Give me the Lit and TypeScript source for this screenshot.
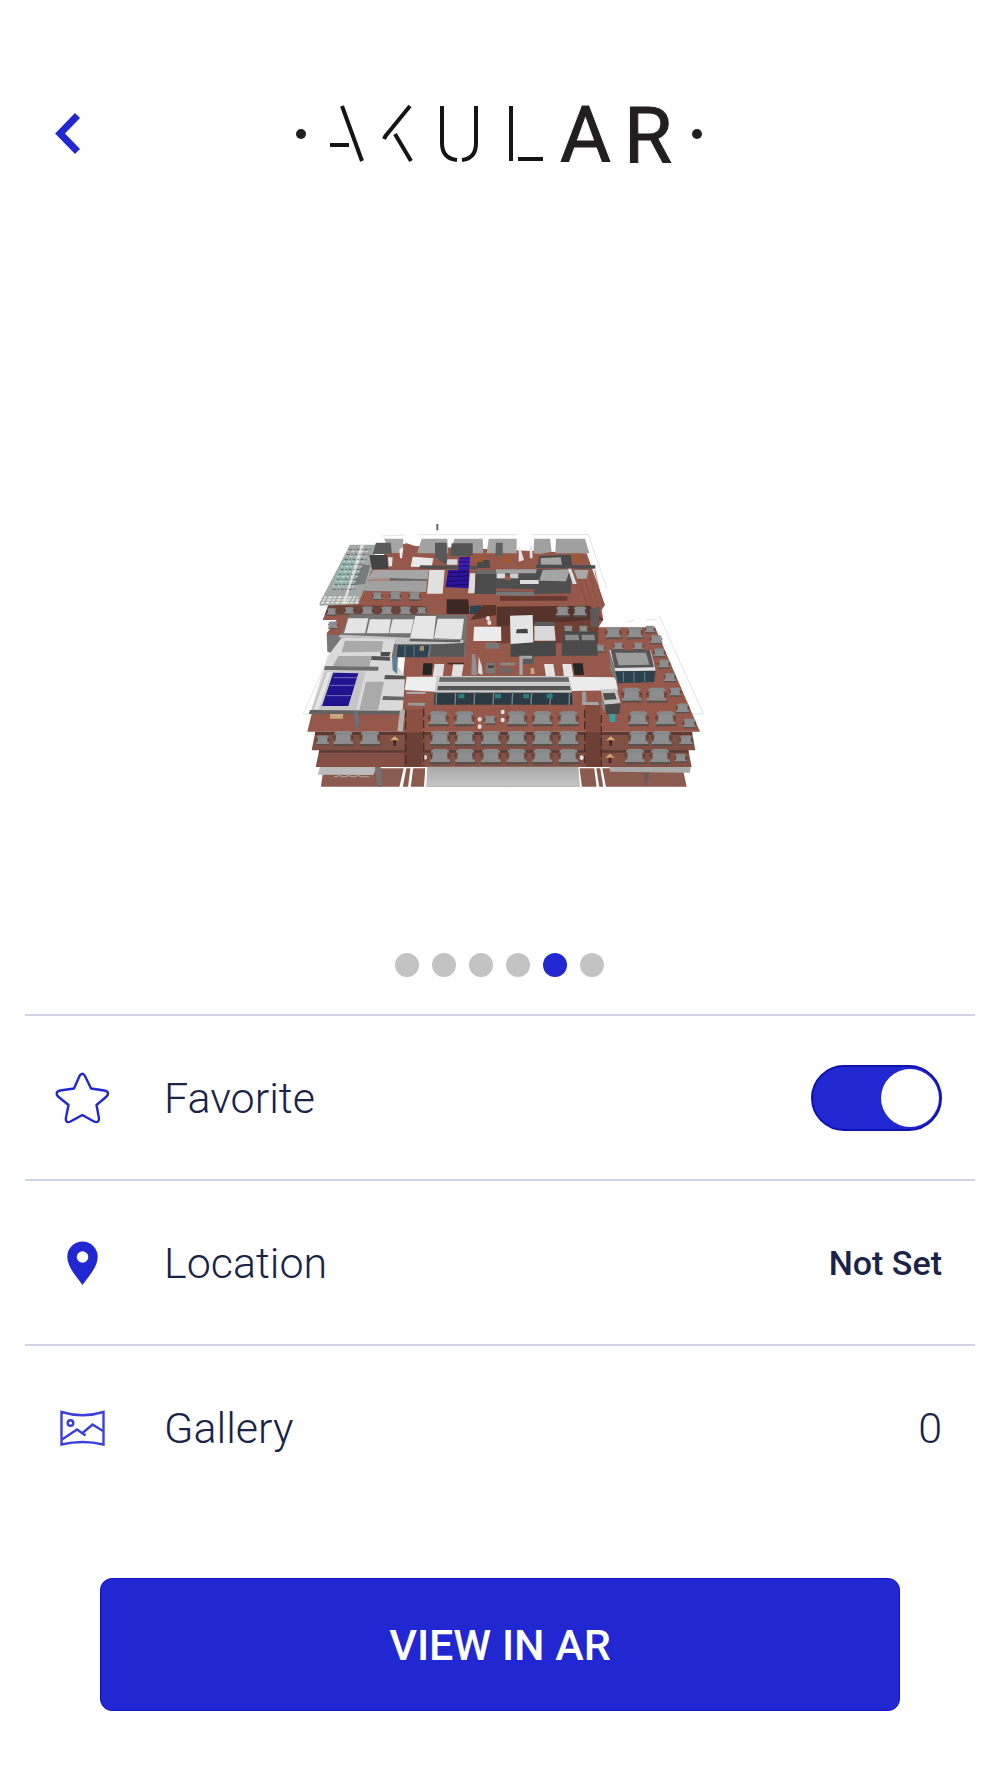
import { LitElement, html, svg, css } from "lit";
import { customElement, property, state } from "lit/decorators.js";

type Poly = [string, string];

const RED = "#95584a";

const decks: Poly[] = [
  // ground floor
  ["100,775 1178,775 1190,830 93,830", "#8c5b50"],
  ["90,770 260,770 250,795 83,794", "#bcbcbc"],
  ["958,770 1202,770 1200,788 960,785", "#a9a9a9"],
  ["342,770 350,770 338,832 328,832", "#ffffff"],
  ["362,770 370,770 362,832 354,832", "#ffffff"],
  ["406,770 414,770 410,832 402,832", "#ffffff"],
  ["862,770 868,770 876,832 868,832", "#ffffff"],
  ["912,770 918,770 928,832 920,832", "#ffffff"],
  ["930,770 936,770 948,832 940,832", "#ffffff"],
  ["255,770 272,770 278,830 262,830", "#77706e"],
  ["1062,788 1078,788 1070,828 1064,822", "#6d5a55"],
  // third, second and first floor
  ["88,720 1195,720 1205,771 77,771", "#845045"],
  ["88,720 1195,720 1196,728 86,728", "#5a3a32"],
  ["76,665 1206,665 1216,721 65,721", "#815044"],
  ["76,665 1206,665 1207,675 74,675", "#5a3a32"],
  ["65,612 330,600 345,440 925,352 1095,352 1230,665 52,665", RED],
  ["348,600 402,596 396,668 342,668", "#8a5042"],
  ["885,585 930,585 934,668 888,668", "#834c3f"],
  ["345,668 398,668 396,770 342,770", "#6c4034"],
  ["886,668 934,668 936,770 888,770", "#6c4034"],
  // upper terrace
  ["300,112 350,100 375,108 890,130 945,285 935,300 940,330 925,352 925,440 130,440 110,370 140,330 98,330 115,285 245,180", RED],
  ["110,372 160,378 125,430 112,425", "#777777"],
  ["470,268 535,268 538,312 470,312", "#3d2824"],
  ["620,290 900,287 940,330 620,350", "#56332b"],
  ["630,258 832,258 832,272 630,272", "#693a2f"],
  ["620,350 900,330 925,345 925,400 620,400", "#713f33"],
  ["540,288 575,286 572,312 540,312", "#2b4454"],
  ["580,285 618,285 618,315 560,328 540,330", "#5a342b"],
  ["115,286 410,288 410,314 105,314", "#6c4338"],
];

const buildings: Poly[] = [
  // glazed roof
  ["180,104 262,104 255,130 245,180 205,282 90,287 88,280", "#a2a8a6"],
  ["162,145 205,143 170,228 122,230", "#93b3af"],
  ["215,165 242,165 225,222 190,225", "#777d7d"],
  ["212,104 222,104 165,282 158,282", "#dfe2e0"],
  // back row
  ["282,86 340,86 338,128 302,130", "#a6a6a6"],
  ["258,98 302,98 306,132 248,132", "#5c5c5c"],
  ["238,135 290,135 296,176 246,178", "#444444"],
  ["395,86 472,86 474,130 381,130", "#a2a2a2"],
  ["435,98 470,98 472,168 435,140", "#585858"],
  ["493,86 578,86 580,130 483,130", "#a2a2a2"],
  ["485,100 548,100 548,138 480,138", "#555555"],
  ["596,86 680,86 680,130 590,130", "#a6a6a6"],
  ["618,98 638,98 638,138 616,138", "#606060"],
  ["733,86 780,86 785,125 750,132 730,130", "#a0a0a0"],
  ["798,86 885,86 898,130 796,130", "#a0a0a0"],
  ["368,140 430,145 425,172 362,170", "#e9e9e9"],
  ["328,118 340,112 336,145 330,145", "#eeeeee"],
  ["294,142 308,142 306,168 296,170", "#e4e4e4"],
  ["686,110 690,110 702,150 686,155", "#e4e4e4"],
  ["718,108 726,108 728,145 720,145", "#e4e4e4"],
  ["472,148 502,148 502,164 470,164", "#dadada"],
  ["390,166 560,168 560,178 388,176", "#505050"],
  ["562,150 598,150 600,174 560,174", "#494949"],
  // long grey roofs
  ["250,180 417,180 413,208 230,210", "#a6a6a6"],
  ["240,206 300,204 300,212 238,212", "#a98a80"],
  ["300,204 412,208 411,213 300,212", "#666666"],
  ["232,212 411,212 408,246 215,242", "#a0a0a0"],
  ["418,180 464,180 458,251 411,251", "#e0e0e0"],
  ["540,190 556,190 554,250 534,250", "#dcdcdc"],
  ["475,180 505,180 508,142 540,140 535,235 466,232", "#2c139c"],
  ["558,180 618,180 618,252 554,252", "#4b4b4b"],
  ["558,180 618,180 618,192 558,192", "#6b6b6b"],
  // right plant room
  ["618,178 848,178 842,250 744,252 618,245", "#4f4f4f"],
  ["618,178 740,178 738,190 618,190", "#a4a4a4"],
  ["620,190 645,190 645,205 620,205", "#dddddd"],
  ["660,190 685,190 685,205 660,205", "#cccccc"],
  ["645,196 660,196 662,210 644,210", "#96584a"],
  ["758,180 840,178 828,214 748,212", "#a5a5a5"],
  ["748,138 842,134 846,166 745,166", "#494949"],
  ["752,144 812,142 816,164 752,164", "#a5a5a5"],
  ["738,164 916,166 916,176 738,174", "#4d4d4d"],
  ["690,210 746,210 746,222 690,222", "#dedede"],
  ["618,235 732,238 732,245 618,243", "#96584a"],
  ["618,245 732,246 732,258 618,256", "#777777"],
  ["834,176 844,176 860,222 848,222", "#dddddd"],
  ["852,180 896,180 890,206 862,206", "#a8a8a8"],
  // white roofed block
  ["178,313 532,315 526,440 320,440 130,430", "#737373"],
  ["175,325 235,325 225,370 162,370", "#e4e4e4"],
  ["240,328 303,328 296,370 230,370", "#e4e4e4"],
  ["308,328 372,328 362,370 298,370", "#e4e4e4"],
  ["376,318 438,318 430,388 360,385", "#e6e6e6"],
  ["443,326 522,326 514,388 432,385", "#e4e4e4"],
  ["150,374 520,390 520,402 315,402 145,382", "#c4c4c4"],
  ["360,386 512,390 510,397 358,394", "#606060"],
  ["424,404 524,398 522,440 420,440", "#585858"],
  ["324,406 418,406 412,442 320,442", "#2d4353"],
  ["390,408 402,408 402,422 388,422", "#a58a62"],
  // lower left roofs
  ["155,383 315,388 305,440 345,500 338,602 60,612 112,440", "#dadada"],
  ["165,392 280,394 275,425 155,427", "#a9a9a9"],
  ["145,438 245,438 238,470 128,468", "#a8a8a8"],
  ["245,438 300,440 300,452 243,450", "#555555"],
  ["272,426 302,426 298,438 272,438", "#4c4c4c"],
  ["105,468 266,470 264,482 102,480", "#6d6d6d"],
  ["106,484 228,484 198,600 64,600", "#c6c6c6"],
  ["112,486 124,486 86,598 72,598", "#e6e6e6"],
  ["130,488 205,490 175,588 96,588", "#1f138f"],
  ["228,515 282,515 264,600 208,600", "#aaaaaa"],
  ["285,495 345,497 345,508 283,508", "#555555"],
  ["280,558 342,560 342,571 277,570", "#666666"],
  ["60,600 336,602 334,613 56,612", "#616161"],
  ["306,440 324,440 321,492 308,480", "#5c7f92"],
  ["330,600 345,600 338,665 322,662", "#b4b0ae"],
  ["192,602 202,602 208,640 200,660 196,640", "#5f7482"],
  ["120,612 160,612 158,626 120,626", "#c9a77a"],
  // middle courtyard
  ["552,350 633,350 634,393 550,393", "#ececec"],
  ["588,398 628,398 628,416 586,416", "#777777"],
  ["660,317 728,315 730,402 662,402", "#e5e5e5"],
  ["680,358 712,356 714,370 678,370", "#444444"],
  ["733,335 793,335 797,348 733,348", "#5c5c5c"],
  ["733,348 793,348 797,392 733,392", "#d8d8d8"],
  ["662,402 797,392 798,438 662,440", "#474747"],
  ["820,363 918,365 924,437 815,437", "#4a4a4a"],
  ["825,374 865,374 868,391 826,391", "#8b8b8b"],
  ["874,374 912,374 916,391 876,391", "#8b8b8b"],
  ["900,296 930,290 926,350 902,350", "#5e5957"],
  ["400,460 428,460 425,495 398,495", "#252525"],
  ["434,462 463,462 458,500 428,500", "#e0e0e0"],
  ["490,462 521,462 515,500 484,500", "#e0e0e0"],
  ["762,462 790,462 796,500 768,500", "#e4e4e4"],
  ["817,462 844,462 850,500 822,500", "#e4e4e4"],
  ["848,460 878,460 882,495 854,495", "#252525"],
  ["472,458 522,458 522,463 472,463", "#4a2c26"],
  ["546,432 556,432 562,495 544,495", "#8f8f8f"],
  ["566,440 576,470 578,495 564,490", "#dddddd"],
  ["588,458 616,458 616,490 588,490", "#777777"],
  ["594,466 612,466 612,474 594,474", "#444444"],
  ["630,458 675,458 675,466 630,466", "#8a8a8a"],
  ["628,474 640,470 668,476 668,488 632,490", "#6d6664"],
  ["700,438 732,438 730,462 700,462", "#5a5a5a"],
  ["688,437 726,437 726,446 698,446 698,495 688,495", "#a5a5a5"],
  ["722,474 732,474 734,492 722,492", "#c9a77a"],
  // front hall
  ["350,500 448,500 436,545 344,540", "#ededed"],
  ["440,498 838,498 846,548 434,548", "#cacaca"],
  ["450,502 835,502 838,515 447,515", "#686868"],
  ["444,528 840,528 842,541 442,541", "#555555"],
  ["434,548 846,548 848,584 432,584", "#2c3b43"],
  ["836,500 976,502 984,541 846,543", "#ebebeb"],
  ["350,545 408,545 406,552 348,552", "#aaaaaa"],
  ["355,578 406,578 404,588 352,586", "#999999"],
  ["876,545 888,545 890,585 876,585", "#9a9a9a"],
  ["876,576 926,576 926,586 876,584", "#a5a5a5"],
  // glazed pavilion
  ["958,420 1082,420 1097,482 976,484", "#e0e0e0"],
  ["962,420 1080,420 1092,472 974,474", "#565656"],
  ["976,428 1068,428 1078,464 986,466", "#9c9c9c"],
  ["958,424 976,484 984,520 960,480", "#7a7a7a"],
  ["976,484 1097,482 1092,516 984,520", "#2b414e"],
  // stair tower
  ["932,538 980,536 992,580 944,584", "#c7c7c7"],
  ["938,550 974,548 980,568 944,570", "#505050"],
  ["932,545 944,584 948,612 936,590", "#8a8a8a"],
  ["944,584 992,580 988,612 948,612", "#484848"],
  ["958,612 976,612 976,636 960,636", "#2aa5a3"],
];

const desks: [number, number, number][] = [
  [445, 625, 1], [523, 625, 1], [680, 625, 1], [757, 625, 1], [835, 625, 1], [1045, 625, 1], [1127, 625, 1],
  [1025, 554, 1], [1100, 554, 1],
  [160, 684, 1], [240, 684, 1], [450, 684, 1], [525, 684, 1], [603, 684, 1], [680, 684, 1], [757, 684, 1], [835, 684, 1], [1045, 684, 1], [1115, 684, 1],
  [450, 738, 1], [525, 738, 1], [603, 738, 1], [680, 738, 1], [757, 738, 1], [835, 738, 1], [1035, 738, 1], [1110, 738, 1],
  [970, 368, 0.8], [1035, 368, 0.8], [818, 304, 0.7], [870, 304, 0.7],
  [1098, 388, 0.6], [1108, 428, 0.6], [1122, 462, 0.6], [1140, 502, 0.6], [1156, 546, 0.6], [1178, 594, 0.65], [1198, 640, 0.65],
  [98, 690, 0.65], [1188, 690, 0.65], [1172, 744, 0.6], [600, 630, 0.6],
  [985, 408, 0.5], [1045, 408, 0.5], [1080, 358, 0.5], [930, 415, 0.5], [880, 358, 0.5], [835, 358, 0.5],
  [262, 258, 0.5], [316, 258, 0.6], [374, 258, 0.6], [232, 302, 0.6], [290, 302, 0.6], [346, 302, 0.6], [125, 305, 0.5], [130, 345, 0.5], [395, 302, 0.5], [178, 302, 0.5],
];

const hairlines = [
  "270,84 275,78 345,75", "385,74 682,74", "725,74 895,74 950,235", "1108,318 1240,611 860,611",
  "103,470 40,612 60,612", "1010,335 1035,330", "1070,330 1100,328",
];

const range = (n: number) => Array.from({ length: n }, (_, i) => i);

@customElement("building-model")
export class BuildingModel extends LitElement {
  static styles = css`
    :host { display: block; }
    .model { display: block; width: 100%; height: auto; }
  `;

  private desk([x, y, s]: [number, number, number]) {
    return svg`<g transform="translate(${x} ${y}) scale(${s})">
      <polygon points="-30,-14 28,-14 34,24 -28,26" fill="#5c4038" opacity=".4"/>
      <polygon points="-20,-21 20,-21 23,15 -24,15" fill="#8c8e8f"/>
      <polygon points="-26,-18 26,-18 27,-10 -27,-10" fill="#868889"/>
      <rect x="-32" y="-4" width="7" height="5" fill="#55403a"/>
      <rect x="25" y="-4" width="7" height="5" fill="#55403a"/>
      <polygon points="-29,10 29,10 30,18 -30,18" fill="#8a8c8d"/>
      <polygon points="-30,18 30,18 29,23 -29,23" fill="#55524f"/>
    </g>`;
  }

  private poly([points, fill]: Poly) {
    return svg`<polygon points=${points} fill=${fill}/>`;
  }

  render() {
    return html`<svg class="model" viewBox="-30 0 1320 870" role="img" aria-label="3D building model">
      <defs>
        <linearGradient id="slab" x1="0" y1="0" x2="0" y2="1">
          <stop offset="0" stop-color="#a9a9a9"/><stop offset="1" stop-color="#c6c6c6"/>
        </linearGradient>
      </defs>
      ${hairlines.map((p) => svg`<polyline points=${p} fill="none" stroke="#d4d4d4" stroke-width="2"/>`)}
      <rect x="439" y="42" width="6" height="19" fill="#666"/>
      ${decks.map((p) => this.poly(p))}
      <polygon points="412,770 865,770 870,830 409,830" fill="url(#slab)"/>
      ${range(4).map((i) => svg`<line x1=${860 + i * 18} y1="180" x2=${890 + i * 16} y2="284" stroke="#87493a" stroke-width="2"/>`)}
      ${desks.map((d) => this.desk(d))}
      ${buildings.map((p) => this.poly(p))}
      ${range(9).map((i) => svg`<line x1=${176 - i * 6} y1=${118 + i * 15} x2=${244 - i * 6} y2=${118 + i * 15} stroke="#5f6866" stroke-width="3" stroke-dasharray="9 5 4 6"/>`)}
      ${range(8).map((i) => svg`<line x1=${172 - i * 6} y1=${125 + i * 15} x2=${238 - i * 6} y2=${125 + i * 15} stroke="#d6dedb" stroke-width="3" stroke-dasharray="5 8 9 6"/>`)}
      ${range(3).map((i) => svg`<line x1=${102 - i * 4} y1=${262 + i * 8} x2="205" y2=${262 + i * 8} stroke="#e9e9e3" stroke-width="5" stroke-dasharray="8 5 12 4"/>`)}
      ${range(4).map((i) => svg`<line x1=${480 - i * 3} y1=${188 + i * 13} x2="535" y2=${184 + i * 13} stroke="#170b55" stroke-width="3"/>`)}
      ${range(3).map((i) => svg`<line x1="508" y1=${150 + i * 12} x2="538" y2=${150 + i * 12} stroke="#5a3bb5" stroke-width="2"/>`)}
      <path d="M121 526H194M110 557H184M132 503H202" stroke="#7770bd" stroke-width="3"/>
      ${range(8).map((i) => svg`<line x1=${440 + i * 57} y1="546" x2=${438 + i * 57} y2="584" stroke="#78858a" stroke-width="4"/>`)}
      ${[505, 615, 700, 770].map((x) => svg`<rect x=${x} y="552" width="18" height="13" fill="#2c7c83"/>`)}
      ${[345, 372, 1000, 1032, 1064].map((x, i) => svg`<line x1=${x} y1=${i < 2 ? 408 : 486} x2=${x} y2=${i < 2 ? 440 : 516} stroke="#67808c" stroke-width="3"/>`)}
      ${[[569, 628], [569, 650], [638, 606], [638, 630], [594, 325], [598, 338], [405, 742], [875, 743]].map(
        ([x, y]) => svg`<ellipse cx=${x} cy=${y} rx="6" ry="7" fill="#e4e0dd"/>`,
      )}
      ${[[314, 688], [962, 688], [960, 740]].map(
        ([x, y]) => svg`<path d="M${x - 14} ${y + 3}L${x} ${y - 9}L${x + 14} ${y + 3}Z" fill="#d2aa73"/><rect x=${x - 4} y=${y + 3} width="8" height="16" fill="#40251e"/>`,
      )}
      ${[[568, 140], [568, 150], [650, 140], [650, 150], [860, 136], [860, 148]].map(
        ([x, y]) => svg`<rect x=${x - 9} y=${y} width="20" height="6" fill="#a55a20"/>`,
      )}
      ${[[347, 600], [401, 596], [884, 600], [934, 615]].map(
        ([x, y]) => svg`<line x1=${x} y1=${y} x2=${x} y2="768" stroke="#4c2a22" stroke-width="4" stroke-dasharray="24 10"/>`,
      )}
      <path d="M132 800h10l6-6 6 6h16l6-6 6 6h16l6-6 6 6h28" fill="none" stroke="#a59b97" stroke-width="4"/>
    </svg>`;
  }
}

@customElement("app-root")
export class AppRoot extends LitElement {
  @property({ type: Number }) slides = 6;
  @state() private current = 4;
  @state() private favorite = true;

  static styles = css`
    :host {
      display: block;
      min-height: 100vh;
      background: #fff;
      color: #1a2348;
      font-family: Roboto, "Liberation Sans", sans-serif;
    }
    .screen { display: flex; flex-direction: column; padding-bottom: 64px; }
    .top {
      display: grid;
      grid-template-columns: 1fr auto 1fr;
      align-items: center;
      padding: 74px 47px 0;
    }
    .back { justify-self: start; padding: 0; border: 0; background: none; cursor: pointer; }
    .back-icon, .logo, .icon { display: block; }
    .brand { font-size: 78px; font-weight: 400; stroke: #231f20; stroke-width: 1px; }
    .preview { width: 44%; margin: 316px auto 0; }
    .pager { display: flex; justify-content: center; gap: 13px; margin-top: 153px; padding-right: 2px; }
    .dot { width: 24px; height: 24px; padding: 0; border: 0; border-radius: 50%; background: #c3c3c3; cursor: pointer; }
    .dot.active { background: #2127d1; }
    .rows { margin: 37px 25px 0; padding: 0; list-style: none; }
    .row {
      display: flex;
      align-items: center;
      box-sizing: border-box;
      height: 165px;
      padding: 0 33px 0 29px;
      border-top: 2px solid #d0d3e3;
    }
    .name { flex: 1; margin-left: 54px; font-size: 43px; font-weight: 300; }
    .note { font-size: 34px; font-weight: 500; }
    .count { font-size: 43px; font-weight: 300; }
    .switch {
      appearance: none;
      display: flex;
      justify-content: flex-end;
      align-items: center;
      box-sizing: border-box;
      width: 131px;
      height: 66px;
      margin: 0;
      padding-right: 1px;
      border: 2px solid #1012b0;
      border-radius: 33px;
      background: #2127d1;
      cursor: pointer;
    }
    .switch::before { content: ""; width: 58px; height: 58px; border-radius: 50%; background: #fff; }
    .switch:not(:checked) { justify-content: flex-start; background: #c3c3c3; border-color: #b0b0b0; }
    .cta {
      width: 80%;
      height: 133px;
      margin: 69px auto 0;
      padding: 0;
      border: 1px solid #1012c4;
      border-radius: 12px;
      background: #2127d1;
      color: #fff;
      font: 500 43px Roboto, "Liberation Sans", sans-serif;
      cursor: pointer;
    }
  `;

  render() {
    return html`<main class="screen">
      <header class="top">
        <button class="back" aria-label="Back">
          <svg class="back-icon" width="40" height="48" viewBox="48 110 40 48">
            <path d="M78.500 115.500L61 133.500L78.500 151.500" fill="none" stroke="#2127d1" stroke-width="7"/>
          </svg>
        </button>
        <svg class="logo" width="410" height="120" viewBox="295 74 410 120" role="img" aria-label="Akular">
          <g fill="none" stroke="#151515" stroke-width="4">
            <line x1="342" y1="106" x2="362" y2="161"/>
            <line x1="330" y1="145" x2="349" y2="145"/>
            <path d="M410 106L388 133Q385 136 384 139"/>
            <line x1="395" y1="134" x2="411" y2="161"/>
            <line x1="442" y1="106" x2="442" y2="144"/>
            <line x1="476" y1="106" x2="476" y2="144"/>
            <path d="M442 143C442 153 447 159 457 160M476 143C476 153 471 159 462 160"/>
            <line x1="511" y1="106" x2="511" y2="161"/>
            <line x1="518" y1="159" x2="543" y2="159"/>
          </g>
          <g fill="#231f20">
            <circle cx="301" cy="134" r="5"/>
            <circle cx="697" cy="134" r="5"/>
            <text class="brand" x="560" y="162">A</text>
            <text class="brand" x="624" y="162">R</text>
          </g>
        </svg>
      </header>

      <building-model class="preview"></building-model>

      <nav class="pager" aria-label="Slides">
        ${range(this.slides).map(
          (i) => html`<button
            class="dot ${i === this.current ? "active" : ""}"
            aria-label="Slide ${i + 1}"
            @click=${() => (this.current = i)}
          ></button>`,
        )}
      </nav>

      <ul class="rows">
        <li class="row">
          <svg class="icon" width="56" height="56" viewBox="54 1068 56 56">
            <path
              d="M79.500 1074Q82.300 1069.500 85 1074L91 1086.500L104.500 1088.500Q110.500 1090 106.500 1094.500L96.500 1103L99 1116.500Q99 1121.500 94 1119.500L82.300 1113L70.500 1119.500Q65.500 1121.500 65.800 1116.500L68.500 1103L58 1094.500Q54.500 1090 60 1088.500L74 1086.500Z"
              fill="none" stroke="#2127d1" stroke-width="2.400" stroke-linejoin="round"
            />
          </svg>
          <label class="name" for="favorite">Favorite</label>
          <input
            class="switch" id="favorite" type="checkbox" role="switch"
            .checked=${this.favorite}
            @change=${() => (this.favorite = !this.favorite)}
          />
        </li>
        <li class="row">
          <svg class="icon" width="56" height="56" viewBox="54 1232 56 56">
            <path
              fill="#2127d1" fill-rule="evenodd"
              d="M82.500 1238.500C74 1238.500 67.300 1245.200 67.300 1253.700C67.300 1264 76 1273 82.500 1282C89 1273 97.700 1264 97.700 1253.700C97.700 1245.200 91 1238.500 82.500 1238.500ZM82.500 1248.200A5.800 5.800 0 1 1 82.500 1259.800A5.800 5.800 0 1 1 82.500 1248.200Z"
            />
          </svg>
          <span class="name">Location</span>
          <span class="note">Not Set</span>
        </li>
        <li class="row">
          <svg class="icon" width="56" height="56" viewBox="54 1397 56 56">
            <g fill="none" stroke="#3b40dc" stroke-width="2.400">
              <path d="M61.500 1409Q82.500 1415.500 103.500 1409V1441.500Q82.500 1436.500 61.500 1441.500Z"/>
              <circle cx="70.500" cy="1420" r="2.800"/>
              <path d="M62 1436.500L77 1426.500L85.500 1432.500M82 1430.500L92.500 1421.500L103 1428"/>
            </g>
          </svg>
          <span class="name">Gallery</span>
          <span class="count">0</span>
        </li>
      </ul>

      <button class="cta">VIEW IN AR</button>
    </main>`;
  }
}
